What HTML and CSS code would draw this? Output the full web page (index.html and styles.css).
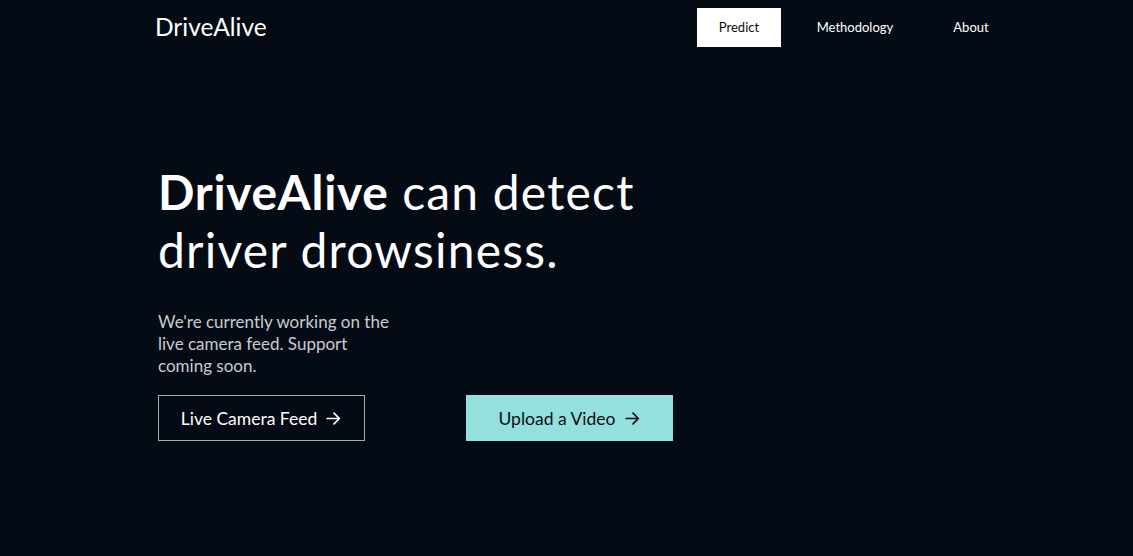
FILE: index.html
```html
<!DOCTYPE html>
<html lang="en">
<head>
<meta charset="utf-8">
<title>DriveAlive</title>
<link rel="stylesheet" href="styles.css">
</head>
<body>
<header class="topbar">
  <a class="brand" href="#">DriveAlive</a>
  <nav class="nav">
    <span class="nav-cell"><a class="nav-link active" href="#">Predict</a></span>
    <span class="nav-cell"><a class="nav-link" href="#">Methodology</a></span>
    <span class="nav-cell"><a class="nav-link" href="#">About</a></span>
  </nav>
</header>
<main class="hero">
  <h1 class="headline"><strong>DriveAlive</strong> can detect driver drowsiness.</h1>
  <p class="note">We're currently working on the live camera feed. Support coming soon.</p>
  <div class="actions">
    <a class="btn btn-outline" href="#">Live Camera Feed <svg class="arrow" viewBox="0 0 16 16" width="17" height="17"><path d="M2 8h11.5M8.5 3L13.5 8l-5 5" fill="none" stroke="currentColor" stroke-width="1.6" stroke-linecap="round" stroke-linejoin="round"/></svg></a>
    <a class="btn btn-fill" href="#">Upload a Video <svg class="arrow" viewBox="0 0 16 16" width="17" height="17"><path d="M2 8h11.5M8.5 3L13.5 8l-5 5" fill="none" stroke="currentColor" stroke-width="1.6" stroke-linecap="round" stroke-linejoin="round"/></svg></a>
  </div>
</main>
</body>
</html>
```
FILE: styles.css
```css
html, body {
  margin: 0;
  padding: 0;
}
body {
  background: #050b14;
  color: #ffffff;
  font-family: "Lato", "Open Sans", sans-serif;
  min-height: 556px;
}
a {
  text-decoration: none;
  color: inherit;
}
.topbar {
  display: flex;
  align-items: center;
  justify-content: space-between;
  padding: 8px 104px 0 155px;
  height: 39px;
}
.brand {
  font-size: 24.5px;
  font-weight: 400;
  letter-spacing: 0;
  color: #fff;
  margin-top: -2px;
}
.nav {
  display: grid;
  grid-template-columns: repeat(3, 116px);
}
.nav-cell {
  display: flex;
  justify-content: center;
}
.nav-link {
  display: flex;
  align-items: center;
  height: 39px;
  padding: 0 22px;
  font-size: 13px;
  color: #fff;
  line-height: 1;
}
.nav-link.active {
  background: #ffffff;
  color: #0a0e14;
}
.hero {
  padding: 116px 0 0 158px;
}
.headline {
  margin: 0;
  width: 560px;
  font-size: 48px;
  font-weight: 400;
  line-height: 58px;
  letter-spacing: 1.2px;
}
.headline strong {
  font-weight: 700;
  letter-spacing: 0.7px;
}
.note {
  margin: 32px 0 0 0;
  width: 240px;
  font-size: 17px;
  line-height: 22px;
  color: #c9ccd0;
}
.actions {
  display: flex;
  gap: 101px;
  margin-top: 18px;
}
.btn {
  box-sizing: border-box;
  width: 207px;
  height: 46px;
  display: flex;
  align-items: center;
  justify-content: center;
  gap: 8px;
  font-size: 17.5px;
}
.btn-outline {
  border: 1px solid #a9adb2;
  color: #fff;
}
.btn-fill {
  background: #93e0dc;
  color: #0a0e14;
}
.arrow {
  display: block;
}
```
